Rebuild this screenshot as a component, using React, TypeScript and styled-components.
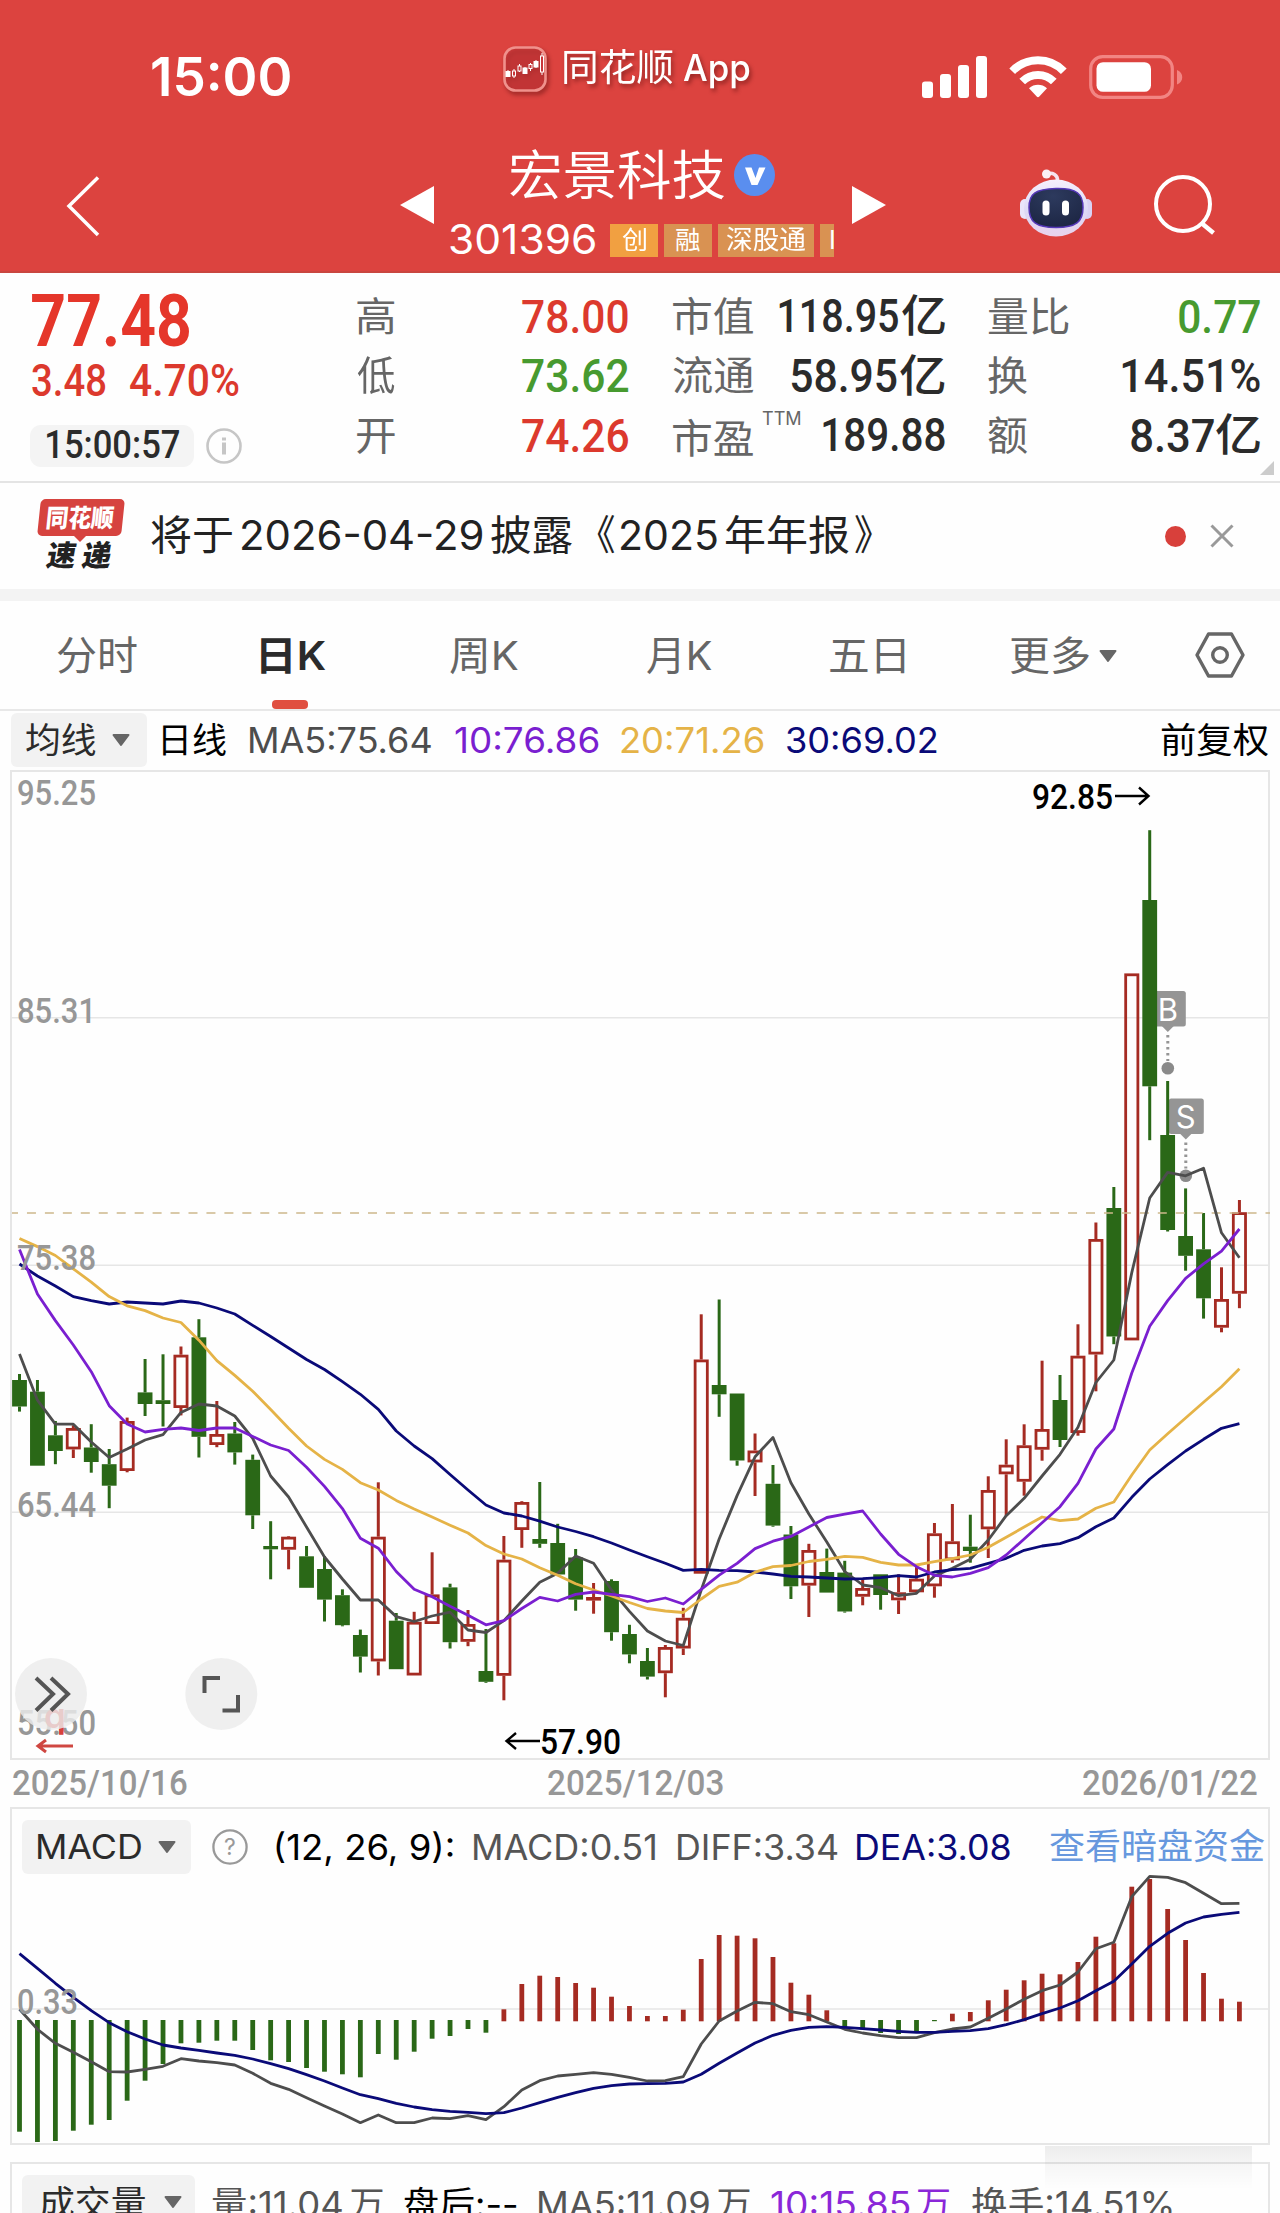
import React, { useLayoutEffect, useRef, useState } from "react";
import styled, { createGlobalStyle } from "styled-components";

const SF = `Inter, "Noto Sans CJK SC", sans-serif`;
const DIN = `Roboto, "Noto Sans CJK SC", sans-serif`;

const C = {
  brand: "#dc433f",
  up: "#dc392d",
  down: "#479a2f",
  ink: "#2b2b2b",
  label: "#666666",
  axis: "#979797",
  line: "#e6e6e6",
  candleUp: "#a52b22",
  candleDown: "#2a6817",
  ma5: "#4d4d4d",
  ma10: "#7a1fd0",
  ma20: "#e5b347",
  ma30: "#0a0a78",
};

const Global = createGlobalStyle`
  html, body { margin: 0; padding: 0; background: #fff; }
  body { width: 1280px; height: 2213px; overflow: hidden; font-family: ${SF}; }
`;

/* ---------- text fitted to a fixed ink width ---------- */

const FitBox = styled.span<{ $w: number; $ml: number; $size: number; $color: string; $weight: number; $din: boolean }>`
  flex: none;
  display: block;
  width: ${(p) => p.$w}px;
  margin-left: ${(p) => p.$ml}px;
  height: 1.2em;
  line-height: 1.2;
  font-family: ${(p) => (p.$din ? DIN : SF)};
  font-size: ${(p) => p.$size}px;
  font-weight: ${(p) => p.$weight};
  color: ${(p) => p.$color};
`;
const FitInk = styled.span`
  display: inline-block;
  white-space: pre;
  transform-origin: 0 50%;
`;

type FitProps = {
  w: number;
  size: number;
  children: string;
  ml?: number;
  dy?: number;
  color?: string;
  weight?: number;
  din?: boolean;
};

function Fit({ w, size, children, ml = 0, dy = 0, color = C.ink, weight = 400, din = false }: FitProps) {
  const ref = useRef<HTMLSpanElement>(null);
  const [transform, setTransform] = useState("none");
  useLayoutEffect(() => {
    const ctx = document.createElement("canvas").getContext("2d");
    if (!ctx || !ref.current) return;
    ctx.font = `${weight} ${size}px ${din ? DIN : SF}`;
    const m = ctx.measureText(children);
    const ink = m.actualBoundingBoxLeft + m.actualBoundingBoxRight;
    setTransform(`translateY(${dy}px) scaleX(${w / ink}) translateX(${m.actualBoundingBoxLeft}px)`);
  }, [w, size, children, weight, din, dy]);
  return (
    <FitBox $w={w} $ml={ml} $size={size} $color={color} $weight={weight} $din={din}>
      <FitInk ref={ref} style={{ transform }}>{children}</FitInk>
    </FitBox>
  );
}

/* ---------- layout parts ---------- */

const Page = styled.main`
  width: 1280px;
  height: 2213px;
  display: flex;
  flex-direction: column;
  overflow: hidden;
  background: #fefefe;
`;
const Header = styled.header`
  flex: none;
  height: 273px;
  box-sizing: border-box;
  background: ${C.brand};
  border-bottom: 2px solid #c9463f;
  display: flex;
  flex-direction: column;
`;
const StatusBar = styled.div`
  display: flex;
  align-items: center;
  padding: 22px 0 0 152px;
  box-sizing: border-box;
  height: 132px;
`;
const AppMark = styled.div`
  display: flex;
  align-items: center;
  width: 250px;
  margin: -17px 0 0 212px;
  filter: drop-shadow(2px 3px 2px rgba(60, 0, 0, 0.45));
`;
const StatusIcons = styled.div`
  display: flex;
  align-items: center;
  margin-left: 169px;
`;
const NavBar = styled.div`
  display: flex;
  align-items: center;
  height: 139px;
`;
const Glyph = styled.svg<{ $ml?: number; $mt?: number }>`
  flex: none;
  display: block;
  overflow: visible;
  margin-left: ${(p) => p.$ml ?? 0}px;
  margin-top: ${(p) => p.$mt ?? 0}px;
`;
const StockTitle = styled.div`
  width: 386px;
  margin-left: 15px;
  display: flex;
  flex-direction: column;
  margin-top: -1px;
`;
const TitleLine = styled.div`
  display: flex;
  align-items: center;
  height: 70px;
  padding-left: 61px;
`;
const CodeLine = styled.div`
  display: flex;
  align-items: center;
  height: 40px;
  margin-top: 8px;
  padding-left: 1px;
`;
const Tag = styled.span<{ $w: number; $bg: string; $ml: number }>`
  flex: none;
  width: ${(p) => p.$w}px;
  height: 33px;
  margin-left: ${(p) => p.$ml}px;
  display: flex;
  align-items: center;
  justify-content: center;
  overflow: hidden;
  background: ${(p) => p.$bg};
`;

const Quote = styled.section`
  flex: none;
  height: 210px;
  box-sizing: border-box;
  border-bottom: 2px solid #e4e4e4;
  display: flex;
  align-items: flex-start;
  position: relative;
`;
const PriceBlock = styled.div`
  width: 325px;
  padding: 1px 0 0 32px;
  display: flex;
  flex-direction: column;
`;
const PriceLine = styled.div<{ $h: number }>`
  display: flex;
  align-items: center;
  height: ${(p) => p.$h}px;
`;
const TimePill = styled.div`
  display: flex;
  align-items: center;
  width: 164px;
  height: 42px;
  margin-left: -2px;
  border-radius: 11px;
  background: #f4f4f4;
`;
const Stats = styled.dl<{ $ml: number; $w: number }>`
  width: ${(p) => p.$w}px;
  margin: 14px 0 0 ${(p) => p.$ml}px;
  display: flex;
  flex-direction: column;
`;
const Stat = styled.div`
  display: flex;
  align-items: center;
  justify-content: space-between;
  height: 59.5px;
`;
const Group = styled.span`
  display: flex;
  align-items: center;
`;
const Superscript = styled.span`
  align-self: flex-start;
  margin: -5px auto 0 9px;
`;
const Corner = styled.i`
  position: absolute;
  right: 6px;
  bottom: 6px;
  width: 14px;
  height: 14px;
  background: #cccccc;
  clip-path: polygon(100% 0, 100% 100%, 0 100%);
`;

const News = styled.section`
  flex: none;
  display: flex;
  align-items: center;
  height: 106px;
  padding-left: 37px;
`;
const NewsBadge = styled.div`
  width: 88px;
  height: 74px;
  display: flex;
  flex-direction: column;
`;
const BadgeTop = styled.div`
  height: 37px;
  display: flex;
  align-items: center;
  background: #d6433f;
  border-radius: 5px;
  margin: 0 2px;
  transform: skewX(-6deg);
`;
const BadgeTail = styled.i`
  width: 12px;
  height: 6px;
  margin-left: 37px;
  background: #d6433f;
  clip-path: polygon(0 0, 100% 0, 50% 100%);
`;
const BadgeBottom = styled.div`
  height: 28px;
  display: flex;
  align-items: center;
  transform: skewX(-10deg);
`;
const Dot = styled.i`
  width: 21px;
  height: 21px;
  margin-left: 292px;
  border-radius: 50%;
  background: #d8403b;
`;
const Band = styled.div`
  flex: none;
  height: 12px;
  background: #f3f3f3;
`;
const Tabs = styled.nav`
  flex: none;
  display: flex;
  align-items: center;
  height: 110px;
  box-sizing: border-box;
  border-bottom: 2px solid #e8e8e8;
`;
const Tab = styled.div<{ $ml: number; $active?: boolean }>`
  height: 108px;
  box-sizing: border-box;
  padding-top: 2px;
  margin-left: ${(p) => p.$ml}px;
  display: flex;
  align-items: center;
  position: relative;
  &::after {
    content: "";
    display: ${(p) => (p.$active ? "block" : "none")};
    position: absolute;
    left: 11px;
    bottom: 0;
    width: 36px;
    height: 9px;
    border-radius: 4px;
    background: #e04f40;
  }
`;
const Legend = styled.div`
  flex: none;
  display: flex;
  align-items: center;
  height: 59px;
  box-sizing: border-box;
  padding: 0 0 1px 11px;
`;
const Picker = styled.div<{ $w: number; $pl: number }>`
  flex: none;
  display: flex;
  align-items: center;
  width: ${(p) => p.$w}px;
  height: 54px;
  box-sizing: border-box;
  padding-left: ${(p) => p.$pl}px;
  border-radius: 6px;
  background: #f2f2f2;
`;
const Panel = styled.section<{ $h: number }>`
  flex: none;
  width: 1260px;
  height: ${(p) => p.$h}px;
  margin-left: 10px;
  box-sizing: border-box;
  border: 2px solid ${C.line};
  display: flex;
  flex-direction: column;
  position: relative;
`;
const PanelHead = styled.div`
  flex: none;
  display: flex;
  align-items: center;
  height: 54px;
  margin-top: 11px;
  padding-left: 10px;
`;
const Plot = styled.svg<{ $mt: number }>`
  flex: none;
  display: block;
  margin: ${(p) => p.$mt}px 0 0 -2px;
`;
const Dates = styled.div`
  flex: none;
  display: flex;
  align-items: center;
  height: 47px;
  padding-left: 12px;
`;
const Gap = styled.div`
  flex: none;
  height: 17px;
`;
const Smudge = styled.i`
  position: absolute;
  left: 1033px;
  top: -18px;
  width: 207px;
  height: 44px;
  background: linear-gradient(rgba(0, 0, 0, 0.07), rgba(0, 0, 0, 0.03) 45%, rgba(0, 0, 0, 0));
`;

const Caret = ({ ml }: { ml: number }) => (
  <Glyph $ml={ml} width="18" height="12" viewBox="0 0 18 12">
    <path d="M1.500 1H16.500L9 11Z" fill="#666" stroke="#666" strokeWidth="2" strokeLinejoin="round" />
  </Glyph>
);

/* ---------- chart data: plot coordinates ---------- */

const STEP = 17.94;
const cx = (i: number) => 19.5 + i * STEP;

// direction, high, body top, body bottom, low
type Candle = [0 | 1, number, number, number, number];
const candles: Candle[] = [
  [0, 1374, 1380, 1406.5, 1411.6], [0, 1380, 1391.7, 1465.7, 1465.7], [0, 1421, 1435.3, 1451, 1464.2], [1, 1425.3, 1428, 1449.4, 1458],
  [0, 1424.2, 1447.5, 1462, 1472.7], [0, 1449, 1464.2, 1485.7, 1508.2], [1, 1417.6, 1421, 1471, 1472.3], [0, 1359, 1392.4, 1404, 1416],
  [0, 1354.3, 1400.2, 1404, 1426.5], [1, 1346.5, 1354.7, 1408, 1415.4], [0, 1319.2, 1337.3, 1436.8, 1457.5], [1, 1401, 1434, 1445, 1447.2],
  [0, 1422, 1433.5, 1452.4, 1464.6], [0, 1454.6, 1459.8, 1515.3, 1529], [0, 1521.2, 1546, 1549.3, 1579.3], [1, 1536, 1536.7, 1549.7, 1569.3],
  [0, 1546, 1556.3, 1587.8, 1587.8], [0, 1556, 1569, 1599.6, 1621.5], [0, 1589.3, 1595.2, 1625.2, 1626.3], [0, 1629.6, 1635, 1656.6, 1672.5],
  [1, 1482.3, 1536.7, 1661.4, 1675.5], [0, 1613, 1620.7, 1669.2, 1669.2], [1, 1611.8, 1621.8, 1675.5, 1675.5], [1, 1552.3, 1594.4, 1624, 1624],
  [0, 1583.7, 1587.4, 1642.2, 1648.5], [1, 1610, 1624, 1641.8, 1646.2], [0, 1629, 1671, 1681.8, 1682.8], [1, 1536, 1559.7, 1675.8, 1700.3],
  [1, 1501.2, 1502, 1530, 1547.8], [0, 1482, 1539, 1543.8, 1547.8], [0, 1523.8, 1543, 1574.5, 1574.5], [0, 1549, 1557.5, 1599.6, 1610.7],
  [1, 1583, 1597, 1600.4, 1613.7], [0, 1579.3, 1581, 1632.2, 1640.7], [0, 1624.8, 1634, 1654.4, 1663.3], [0, 1648, 1661, 1676.6, 1679.5],
  [1, 1645, 1647, 1673.2, 1697.3], [1, 1607.8, 1617.8, 1648.5, 1655], [1, 1314.3, 1359.5, 1573.7, 1573.7], [0, 1299.5, 1385, 1394.3, 1416.8],
  [0, 1393.5, 1393.5, 1460.5, 1465.7], [1, 1433.5, 1450.5, 1462.4, 1496], [0, 1465, 1483.8, 1525.6, 1526.7], [0, 1526, 1534.5, 1586.3, 1599],
  [1, 1543.8, 1550, 1585.6, 1617], [0, 1548.6, 1572, 1592.6, 1592.6], [0, 1560.8, 1572.6, 1611.5, 1612.6], [1, 1580, 1588, 1596.7, 1605.3],
  [0, 1574.3, 1574.3, 1595, 1609.7], [1, 1574.3, 1592.3, 1600.3, 1614], [1, 1566, 1578.7, 1592.3, 1594], [1, 1523, 1533.3, 1586.3, 1597.7],
  [1, 1504, 1541.3, 1560.3, 1562.7], [0, 1514.7, 1546.7, 1551, 1562.7], [1, 1476.3, 1490, 1529.3, 1558], [1, 1439.3, 1464.7, 1474.3, 1515.7],
  [1, 1424.3, 1445.3, 1481.7, 1495.7], [1, 1360.7, 1429, 1449.7, 1460.7], [0, 1375, 1400, 1440, 1447], [1, 1324.3, 1355.7, 1433, 1435.7],
  [1, 1222.5, 1239, 1354.5, 1391.3], [0, 1187, 1208, 1336.5, 1344.2], [1, 973.4, 973.4, 1340.4, 1340.4], [0, 830.2, 900, 1086.3, 1140.2],
  [0, 1081, 1135, 1230, 1231.5], [0, 1188.4, 1236, 1255.8, 1270.7], [0, 1213, 1249.3, 1298.3, 1318.6], [1, 1267.3, 1299, 1327.7, 1332.3],
  [1, 1200, 1212.2, 1293.7, 1308.2],
];

const ma5 = [1353.9, 1400.2, 1424.2, 1424.2, 1442, 1457.5, 1449, 1440, 1434.6, 1412.4, 1404, 1406, 1416, 1438.3, 1476, 1497, 1527, 1557, 1579, 1600, 1600, 1616.6, 1621.5, 1616, 1612.2, 1630, 1632.5, 1620.7, 1601, 1582.2, 1573.3, 1556, 1563.3, 1590, 1611.4, 1631, 1641, 1645.5, 1590, 1539, 1495.6, 1456.8, 1437.5, 1482.7, 1514, 1542, 1571.5, 1585, 1587.7, 1595.7, 1593.3, 1576, 1568.3, 1559.3, 1540, 1515.7, 1498.3, 1476, 1454.3, 1427.3, 1382.5, 1360, 1272.6, 1198, 1172.4, 1175.8, 1168.2, 1232.8, 1257.7];
const ma10 = [1249.6, 1294, 1320.6, 1345, 1371.7, 1405.7, 1424, 1432, 1429.4, 1428, 1430.5, 1428, 1428, 1436.4, 1445, 1450.5, 1467.2, 1486.4, 1508.6, 1538.2, 1548.2, 1571.5, 1589.3, 1596.7, 1606.3, 1615.2, 1624.8, 1620.7, 1608.5, 1597.4, 1601, 1594.4, 1592, 1594.4, 1596.7, 1601.5, 1598, 1604, 1589.3, 1575.2, 1563.3, 1548.6, 1541.2, 1536.4, 1527, 1517.5, 1514.2, 1511, 1534, 1554.3, 1566.7, 1575.3, 1577, 1573.3, 1567.7, 1555, 1539, 1522.7, 1506.7, 1483.3, 1449, 1429, 1373, 1326.2, 1300.6, 1278.4, 1263.8, 1251.2, 1229];
const ma20 = [1238.5, 1246.6, 1255.5, 1268.8, 1282.2, 1296.6, 1305.8, 1310.6, 1318, 1322.5, 1340.2, 1360.6, 1375.4, 1391.3, 1409.4, 1428.3, 1446, 1459.4, 1469.4, 1482.7, 1490, 1500.4, 1509, 1517, 1525.2, 1533, 1545.6, 1554, 1559, 1567.8, 1575.2, 1583.7, 1590, 1596, 1602.5, 1608.5, 1611, 1612.5, 1599, 1586.3, 1582.2, 1572.2, 1566.7, 1565.5, 1561.5, 1559.3, 1556.3, 1557.4, 1562.3, 1565, 1565, 1561.7, 1558.7, 1555, 1547.3, 1537.3, 1527, 1517, 1520.7, 1519, 1508.3, 1502, 1475, 1450, 1433.7, 1418, 1402.3, 1386.7, 1368.7];
const ma30 = [1264, 1276, 1286, 1296.6, 1300.7, 1304, 1302, 1303, 1304, 1301, 1303, 1308, 1314, 1325.4, 1336.5, 1348, 1359.5, 1369.5, 1381.7, 1394.3, 1409.4, 1431, 1446, 1458.6, 1474.5, 1490, 1505, 1513, 1516, 1521.2, 1527, 1531.5, 1536.7, 1543, 1550, 1556.7, 1563.3, 1570.4, 1569.3, 1570.4, 1570.7, 1572, 1574, 1576.3, 1577, 1578, 1579, 1578.7, 1577.7, 1575.7, 1577, 1572, 1569.7, 1568.3, 1563.3, 1558.3, 1550.3, 1546, 1543.7, 1537.7, 1526.7, 1518, 1497.3, 1479, 1464.7, 1451, 1439.3, 1428.3, 1423.7];

const bars = [2131.7, 2142, 2141, 2130.7, 2124.7, 2120, 2100.7, 2080.7, 2064, 2043.3, 2042.7, 2040.7, 2040.7, 2050, 2060.3, 2062, 2068, 2071.7, 2074.3, 2077.3, 2054, 2059.7, 2051.7, 2038.7, 2036, 2029, 2032.7, 2009.3, 1984, 1975.7, 1977, 1983, 1987.7, 1996.7, 2006, 2016, 2016, 2009.7, 1959, 1935, 1935.7, 1938.3, 1957, 1982.7, 1994.7, 2010.3, 2028, 2029.3, 2033, 2034, 2031.7, 2021.2, 2013.7, 2012, 2000.3, 1989.7, 1980.3, 1973.7, 1974.3, 1962, 1936.7, 1943.3, 1886.7, 1879, 1909, 1940, 1973, 1998.7, 2001.7];
const diff = [2009.3, 2029.3, 2043.3, 2052.3, 2061.7, 2071.7, 2072, 2069.3, 2066.3, 2058.7, 2061, 2062.7, 2065, 2073.3, 2083.3, 2089.3, 2097.7, 2106, 2114, 2122.7, 2115, 2122.7, 2122.7, 2118, 2118.7, 2115.7, 2119.7, 2106.7, 2090, 2080.7, 2076, 2074.3, 2072.7, 2074.3, 2077.3, 2081, 2080.7, 2076.7, 2044, 2021, 2011, 2002.3, 2003.7, 2011.7, 2014.7, 2022, 2029.3, 2033, 2035.7, 2037.7, 2037.7, 2032.7, 2029, 2027, 2018.3, 2009, 1999.3, 1990.7, 1985, 1972, 1948.7, 1942.3, 1896.7, 1876.3, 1877.3, 1882.7, 1893.3, 1903.7, 1903.3];
const dea = [1953.7, 1968.3, 1983.3, 1997.3, 2010.7, 2022.7, 2031.7, 2039, 2045, 2048, 2050.3, 2053, 2055.3, 2059, 2063.7, 2068.7, 2074.7, 2081, 2088, 2094.7, 2098.7, 2103.3, 2107, 2109.7, 2111.3, 2112.3, 2113.7, 2112.7, 2108, 2102.7, 2097.3, 2092.7, 2088.3, 2085.7, 2084, 2083.7, 2083.3, 2082, 2074.3, 2063.3, 2053, 2043, 2035.3, 2030.3, 2027.3, 2026.7, 2027.3, 2028.7, 2030, 2031.3, 2032.3, 2032.3, 2031.3, 2030.7, 2028.7, 2024.7, 2019.7, 2013.7, 2008, 2000.7, 1990.7, 1981.3, 1964, 1946.3, 1933.3, 1923, 1917, 1914.3, 1912.3];

const Series = ({ data, color }: { data: number[]; color: string }) => (
  <polyline points={data.map((y, i) => `${cx(i)},${y}`).join(" ")} fill="none" stroke={color} strokeWidth="2.8" strokeLinejoin="round" />
);

const AxisText = ({ y, w = 79, children }: { y: number; w?: number; children: string }) => (
  <text x="17" y={y + 12.5} fontFamily={DIN} fontSize="35" fontWeight="500" fill={C.axis} textLength={w} lengthAdjust="spacingAndGlyphs">
    {children}
  </text>
);

const Marker = ({ x, y, label }: { x: number; y: number; label: string }) => (
  <g fill="#959595">
    <rect x={x - 17} y={y} width="35" height="35.5" rx="2.5" />
    <path d={`M${x - 6} ${y + 35}h12l-6 6z`} />
    <line x1={x} x2={x} y1={y + 44} y2={y + 70} stroke="#959595" strokeWidth="3" strokeDasharray="2.6 3.4" />
    <circle cx={x} cy={y + 77.3} r="6.3" fill="#8a8a8a" />
    <text x={x} y={y + 30} textAnchor="middle" fontFamily={SF} fontSize="31" fill="#fff">{label}</text>
  </g>
);

function KLine() {
  return (
    <Plot $mt={-2} width="1260" height="990" viewBox="10 770 1260 990">
      {[1017.7, 1265.2, 1512.3].map((y) => (
        <line key={y} x1="10" x2="1270" y1={y} y2={y} stroke={C.line} strokeWidth="1.6" />
      ))}
      <AxisText y={792.3}>95.25</AxisText>
      <AxisText y={1010}>85.31</AxisText>
      <Marker x={1167.8} y={991} label="B" />
      <Marker x={1185.8} y={1098.4} label="S" />
      {candles.map(([up, hi, top, bot, lo], i) => {
        const x = cx(i);
        const color = up ? C.candleUp : C.candleDown;
        return (
          <g key={i}>
            {hi < top && <line x1={x} x2={x} y1={hi} y2={top} stroke={color} strokeWidth="3" />}
            {lo > bot && <line x1={x} x2={x} y1={bot} y2={lo} stroke={color} strokeWidth="3" />}
            {up ? (
              <rect x={x - 6.1} y={top + 1.4} width="12.2" height={Math.max(bot - top - 2.8, 0.8)} fill="none" stroke={color} strokeWidth="2.8" />
            ) : (
              <rect x={x - 7.4} y={top} width="14.8" height={bot - top} fill={color} />
            )}
          </g>
        );
      })}
      <line x1="12" x2="1270" y1="1213" y2="1213" stroke="#cdb88c" strokeWidth="1.6" strokeDasharray="9 8.95" strokeDashoffset="3" />
      <Series data={ma5} color={C.ma5} />
      <Series data={ma30} color={C.ma30} />
      <Series data={ma20} color={C.ma20} />
      <Series data={ma10} color={C.ma10} />
      <AxisText y={1257.5}>75.38</AxisText>
      <AxisText y={1504.5}>65.44</AxisText>
      <AxisText y={1722.5}>55.50</AxisText>
      <g fontFamily={DIN} fontSize="35" fontWeight="500" fill="#000">
        <text x="1032" y="808.7" textLength="81" lengthAdjust="spacingAndGlyphs">92.85</text>
        <text x="540" y="1753.5" textLength="81" lengthAdjust="spacingAndGlyphs">57.90</text>
      </g>
      <g fill="none" stroke="#000" strokeWidth="2.4">
        <path d="M1115 796H1148M1139 787.5L1148.5 796L1139 804.5" />
        <path d="M540 1741H507M516 1733L506.500 1741L516 1749" />
      </g>
      <text x="44" y="1728" fontFamily={SF} fontSize="35" fontWeight="600" fill="#d8403b">q</text>
      <path d="M73 1746H38M46 1740L38 1746L46 1752" fill="none" stroke="#cf4741" strokeWidth="3" />
      <g fill="#ebebeb" fillOpacity="0.82">
        <circle cx="51" cy="1694" r="36" />
        <circle cx="221.300" cy="1694" r="36" />
      </g>
      <g fill="none" stroke="#555" strokeWidth="4">
        <path d="M36 1678L53 1694L36 1710.500M51 1678L68 1694L51 1710.500" />
        <path d="M204.500 1693V1678H220M238 1695V1710.500H222.500" />
      </g>
    </Plot>
  );
}

function MacdPlot() {
  return (
    <Plot $mt={0} width="1260" height="269" viewBox="10 1874 1260 269">
      <line x1="10" x2="1270" y1="2009" y2="2009" stroke={C.line} strokeWidth="1.6" />
      {bars.map((y, i) => {
        const up = y < 2021;
        return <rect key={i} x={cx(i) - 2.4} y={up ? y : 2020} width="4.8" height={up ? 2021.3 - y : y - 2020} fill={up ? C.candleUp : C.candleDown} />;
      })}
      <Series data={diff} color={C.ma5} />
      <Series data={dea} color={C.ma30} />
      <AxisText y={2001.3} w={61}>0.33</AxisText>
    </Plot>
  );
}

/* ---------- icons ---------- */

const AppIcon = () => (
  <Glyph width="44" height="46" viewBox="0 0 44 46">
    <rect x="1.500" y="1.500" width="41" height="43" rx="11" fill="#c9353a" fillOpacity="0.5" stroke="#f0918c" strokeWidth="2.600" />
    <g fill="#fff" stroke="#fff" strokeWidth="1">
      <path d="M5 24V31M11 23V32M16.500 18V26M22 21V28M27.500 17V25M33 14V22M39 7V29" />
      <rect x="3" y="25.500" width="4" height="5" />
      <rect x="9.500" y="25" width="3" height="5" fill="#c9353a" />
      <rect x="15" y="20" width="3" height="5" fill="#c9353a" />
      <rect x="20" y="22" width="4" height="5.500" />
      <rect x="26" y="18.500" width="3" height="4" fill="#c9353a" />
      <rect x="31" y="15.500" width="4" height="5.500" />
      <rect x="37.500" y="10" width="3" height="16" fill="#c9353a" />
    </g>
  </Glyph>
);

const Signal = () => (
  <Glyph width="65" height="42" viewBox="0 0 65 42" fill="#fff">
    <rect x="0" y="25.500" width="11" height="16.500" rx="3" />
    <rect x="18" y="18" width="11" height="24" rx="3" />
    <rect x="36" y="9" width="11" height="33" rx="3" />
    <rect x="54" y="0" width="11" height="42" rx="3" />
  </Glyph>
);

const Wifi = () => (
  <Glyph $ml={22} width="58" height="42" viewBox="0 0 58 42">
    <g fill="none" stroke="#fff" strokeWidth="8">
      <path d="M3.200 15.200C17.500 .6 40.500 .6 54.800 15.200" />
      <path d="M13.200 25.500C22 16.700 36 16.700 44.800 25.500" />
    </g>
    <path d="M20 32.200C25.200 27.700 32.800 27.700 38 32.200L30.300 40.600Q29 42 27.700 40.600Z" fill="#fff" />
  </Glyph>
);

const Battery = () => (
  <Glyph $ml={22} width="94" height="44" viewBox="0 0 94 44">
    <rect x="1.700" y="1.700" width="81.600" height="40.600" rx="12" fill="none" stroke="#f28583" strokeWidth="3.200" />
    <rect x="7.500" y="7.200" width="54.500" height="29.600" rx="6.500" fill="#fff" />
    <path d="M88 15C95 17.500 95 27 88 29.500Z" fill="#f28583" />
  </Glyph>
);

const Robot = () => (
  <Glyph $ml={134} $mt={2} width="72" height="68" viewBox="0 0 72 68">
    <defs>
      <linearGradient id="shell" x1="0" y1="0" x2="0" y2="1">
        <stop offset="0" stopColor="#f7effc" />
        <stop offset="0.55" stopColor="#dcd9f6" />
        <stop offset="1" stopColor="#e9d3ec" />
      </linearGradient>
      <radialGradient id="visor" cx="0.45" cy="0.2" r="0.9">
        <stop offset="0" stopColor="#2d3a5e" />
        <stop offset="1" stopColor="#1b2441" />
      </radialGradient>
    </defs>
    <path d="M26 5C33 3 38 6 37.500 12" fill="none" stroke="#f6e2ee" strokeWidth="3.500" strokeLinecap="round" />
    <circle cx="26.500" cy="5" r="4.500" fill="#fbf0f6" />
    <rect x="0" y="30" width="10" height="20" rx="5" fill="#e9e4fa" />
    <rect x="62" y="30" width="10" height="20" rx="5" fill="#d9d2f4" />
    <ellipse cx="36" cy="39" rx="32" ry="28.500" fill="url(#shell)" />
    <path d="M36 19.500C57 19 63 25 63 38.500C63 53 56 58.500 36 58.500S9 53 9 38.500C9 25 15 20 36 19.500Z" fill="url(#visor)" stroke="#5538b8" strokeWidth="1.500" />
    <rect x="22.500" y="31.500" width="7" height="15" rx="3.500" fill="#fff" />
    <rect x="42" y="31.500" width="7" height="15" rx="3.500" fill="#fff" />
  </Glyph>
);

/* ---------- page ---------- */

export default function App() {
  return (
    <Page>
      <Global />
      <Header>
        <StatusBar>
          <Fit w={138.500} size={53} weight={600} dy={1} color="#fff">15:00</Fit>
          <AppMark>
            <AppIcon />
            <Fit ml={17.500} w={109} size={37} color="#fff">同花顺</Fit>
            <Fit ml={9.500} w={67} size={37} color="#fff" weight={500}>App</Fit>
          </AppMark>
          <StatusIcons>
            <Signal />
            <Wifi />
            <Battery />
          </StatusIcons>
        </StatusBar>
        <NavBar>
          <Glyph $ml={66} $mt={8} width="34" height="62" viewBox="0 0 34 62">
            <path d="M32 2.500L3 31L32 60" fill="none" stroke="#fff" strokeWidth="3.500" />
          </Glyph>
          <Glyph $ml={300} $mt={6} width="34" height="38" viewBox="0 0 34 38">
            <path d="M34 0V38L0 19Z" fill="#fff" />
          </Glyph>
          <StockTitle>
            <TitleLine>
              <Fit w={214} size={53} color="#fff" weight={350}>宏景科技</Fit>
              <Glyph $ml={10} $mt={-4} width="41" height="42" viewBox="0 0 41 42">
                <ellipse cx="20.500" cy="21" rx="20.500" ry="21" fill="#5a8eef" />
                <path d="M11 13.500H17.500L21.500 24L25 13.500H31.500L23.500 31H17.500Z" fill="#fff" />
              </Glyph>
            </TitleLine>
            <CodeLine>
              <Fit w={145} size={41} color="#fff">301396</Fit>
              <Tag $ml={15} $w={48} $bg="#f1a041"><Fit w={24} size={25} color="#fff">创</Fit></Tag>
              <Tag $ml={6} $w={48} $bg="#d99252"><Fit w={24.500} size={25} color="#fff">融</Fit></Tag>
              <Tag $ml={6} $w={96} $bg="#d99252"><Fit w={80} size={26} color="#fff">深股通</Fit></Tag>
              <Tag $ml={6} $w={14} $bg="#d99252"><Fit ml={11} w={3} size={25} color="#fff">I</Fit></Tag>
            </CodeLine>
          </StockTitle>
          <Glyph $ml={17} $mt={6} width="34" height="38" viewBox="0 0 34 38">
            <path d="M0 0V38L34 19Z" fill="#fff" />
          </Glyph>
          <Robot />
          <Glyph $ml={61} $mt={5} width="62" height="62" viewBox="0 0 62 62">
            <circle cx="30" cy="31" r="27" fill="none" stroke="#fff" strokeWidth="4" />
            <path d="M49 50.500L60.500 60" stroke="#fff" strokeWidth="4.500" />
          </Glyph>
        </NavBar>
      </Header>

      <Quote>
        <PriceBlock>
          <PriceLine $h={94}>
            <Fit w={157} size={72} weight={700} din dy={0.5} color="#e5362a">77.48</Fit>
          </PriceLine>
          <PriceLine $h={28}>
            <Fit w={73.500} size={43.500} weight={500} din color={C.up}>3.48</Fit>
            <Fit ml={24} w={109} size={43.500} weight={500} din color={C.up}>4.70%</Fit>
          </PriceLine>
          <PriceLine $h={99}>
            <TimePill>
              <Fit ml={17} w={132} size={38} weight={500} din>15:00:57</Fit>
            </TimePill>
            <Glyph $ml={12} width="36" height="36" viewBox="0 0 36 36">
              <circle cx="18" cy="18" r="16.500" fill="none" stroke="#c6c6c6" strokeWidth="2.600" />
              <path d="M18 9.500V12.500M18 14.500V26.500" stroke="#c6c6c6" strokeWidth="4" />
            </Glyph>
          </PriceLine>
        </PriceBlock>
        <Stats $ml={0} $w={270.500}>
          <Stat><Fit w={37.500} size={40} color={C.label}>高</Fit><Fit w={106} size={47} weight={500} din color={C.up}>78.00</Fit></Stat>
          <Stat><Fit w={37.500} size={40} color={C.label}>低</Fit><Fit w={106} size={47} weight={500} din color={C.down}>73.62</Fit></Stat>
          <Stat><Fit w={37.500} size={40} color={C.label}>开</Fit><Fit w={106} size={47} weight={500} din color={C.up}>74.26</Fit></Stat>
        </Stats>
        <Stats $ml={45} $w={272}>
          <Stat>
            <Fit w={80.500} size={40} color={C.label}>市值</Fit>
            <Group><Fit w={119.500} size={46} weight={500} din>118.95</Fit><Fit ml={3.500} w={43} size={44} weight={500}>亿</Fit></Group>
          </Stat>
          <Stat>
            <Fit w={80.500} size={40} color={C.label}>流通</Fit>
            <Group><Fit w={106} size={46} weight={500} din>58.95</Fit><Fit ml={3.500} w={44.500} size={44} weight={500}>亿</Fit></Group>
          </Stat>
          <Stat>
            <Fit w={80.500} size={40} dy={3} color={C.label}>市盈</Fit>
            <Superscript><Fit w={39} size={18.500} dy={6} color={C.label}>TTM</Fit></Superscript>
            <Fit w={121.500} size={46} weight={500} din>189.88</Fit>
          </Stat>
        </Stats>
        <Stats $ml={43.500} $w={272}>
          <Stat><Fit w={80.500} size={40} color={C.label}>量比</Fit><Fit w={81} size={47} weight={500} din color={C.down}>0.77</Fit></Stat>
          <Stat><Fit w={39} size={40} color={C.label}>换</Fit><Fit w={138} size={47} weight={500} din>14.51%</Fit></Stat>
          <Stat>
            <Fit w={39} size={40} color={C.label}>额</Fit>
            <Group><Fit w={83} size={47} weight={500} din>8.37</Fit><Fit ml={2.500} w={44} size={44} weight={500}>亿</Fit></Group>
          </Stat>
        </Stats>
        <Corner />
      </Quote>

      <News>
        <NewsBadge>
          <BadgeTop><Fit ml={8} w={67} size={25} weight={900} color="#fff">同花顺</Fit></BadgeTop>
          <BadgeTail />
          <BadgeBottom>
            <Fit ml={10} w={29} size={29} weight={900} color="#222">速</Fit>
            <Fit ml={6.500} w={29} size={29} weight={900} color="#222">递</Fit>
          </BadgeBottom>
        </NewsBadge>
        <Fit ml={25.500} w={81} size={41} color="#222">将于</Fit>
        <Fit ml={10.500} w={240} size={41} color="#222">2026-04-29</Fit>
        <Fit ml={8.500} w={81} size={41} color="#222">披露</Fit>
        <Fit ml={25} w={17.500} size={41} color="#222">《</Fit>
        <Fit ml={7} w={96} size={41} color="#222">2025</Fit>
        <Fit ml={7.500} w={124} size={41} color="#222">年年报</Fit>
        <Fit ml={6.500} w={17.500} size={41} color="#222">》</Fit>
        <Dot />
        <Glyph $ml={24} width="24" height="24" viewBox="0 0 24 24">
          <path d="M1.500 1.500L22.500 22.500M22.500 1.500L1.500 22.500" stroke="#999" strokeWidth="3" />
        </Glyph>
      </News>
      <Band />

      <Tabs>
        <Tab $ml={57}><Fit w={80} size={40} color={C.label}>分时</Fit></Tab>
        <Tab $ml={124} $active><Fit w={65} size={40} weight={600}>日K</Fit></Tab>
        <Tab $ml={123.500}><Fit w={68} size={40} color={C.label}>周K</Fit></Tab>
        <Tab $ml={129.500}><Fit w={64.500} size={40} color={C.label}>月K</Fit></Tab>
        <Tab $ml={118.500}><Fit w={75} size={40} color={C.label}>五日</Fit></Tab>
        <Tab $ml={105}><Fit w={79} size={40} color={C.label}>更多</Fit><Caret ml={10} /></Tab>
        <Glyph $ml={78} width="50" height="46" viewBox="0 0 50 46">
          <path d="M13.500 2H36.500L48 23L36.500 44H13.500L2 23Z" fill="none" stroke="#666" strokeWidth="3.400" strokeLinejoin="round" />
          <circle cx="25" cy="23" r="7.300" fill="none" stroke="#666" strokeWidth="3.400" />
        </Glyph>
      </Tabs>

      <Legend>
        <Picker $w={136} $pl={14.500}><Fit w={69.500} size={35}>均线</Fit><Caret ml={17} /></Picker>
        <Fit ml={15.500} w={63} size={35} color="#000">日线</Fit>
        <Fit ml={24.500} w={181} size={35} color={C.ma5}>MA5:75.64</Fit>
        <Fit ml={23.500} w={143.500} size={35} color={C.ma10}>10:76.86</Fit>
        <Fit ml={23} w={142.500} size={35} color={C.ma20}>20:71.26</Fit>
        <Fit ml={23} w={149.500} size={35} color={C.ma30}>30:69.02</Fit>
        <Fit ml={224.500} w={107} size={35} color="#000">前复权</Fit>
      </Legend>

      <Panel $h={990}><KLine /></Panel>

      <Dates>
        <Fit ml={0.500} w={174} size={35} weight={500} din color={C.axis}>2025/10/16</Fit>
        <Fit ml={361} w={174.500} size={35} weight={500} din color={C.axis}>2025/12/03</Fit>
        <Fit ml={361} w={174} size={35} weight={500} din color={C.axis}>2026/01/22</Fit>
      </Dates>

      <Panel $h={338}>
        <PanelHead>
          <Picker $w={169} $pl={15.500}><Fit w={103} size={34.500}>MACD</Fit><Caret ml={17.500} /></Picker>
          <Glyph $ml={21} width="36" height="36" viewBox="0 0 36 36">
            <circle cx="18" cy="18" r="16.600" fill="none" stroke="#999" strokeWidth="2.300" />
            <text x="18" y="26" textAnchor="middle" fontFamily={SF} fontSize="23" fill="#999">?</text>
          </Glyph>
          <Fit ml={28} w={177} size={35} color="#000">(12, 26, 9):</Fit>
          <Fit ml={21} w={181.500} size={35} color="#555">MACD:0.51</Fit>
          <Fit ml={22} w={159.500} size={35} color="#555">DIFF:3.34</Fit>
          <Fit ml={20} w={153} size={35} color={C.ma30}>DEA:3.08</Fit>
          <Fit ml={39.500} w={214.500} size={35.500} color="#6798de">查看暗盘资金</Fit>
        </PanelHead>
        <MacdPlot />
      </Panel>
      <Gap />
      <Panel $h={200}>
        <PanelHead>
          <Picker $w={173} $pl={17.500}><Fit w={105.500} size={35} dy={1}>成交量</Fit><Caret ml={19} /></Picker>
          <Fit ml={16.500} w={130} size={35} dy={2} color="#555">量:11.04</Fit>
          <Fit ml={9} w={32} size={35} dy={2} color="#555">万</Fit>
          <Fit ml={21.500} w={112.500} size={35} dy={2} color="#000">盘后:--</Fit>
          <Fit ml={22} w={170} size={35} dy={2} color="#555">MA5:11.09</Fit>
          <Fit ml={9} w={32} size={35} dy={2} color="#555">万</Fit>
          <Fit ml={21} w={139} size={35} dy={2} color="#8a27d8">10:15.85</Fit>
          <Fit ml={7.500} w={32} size={35} dy={2} color="#8a27d8">万</Fit>
          <Fit ml={22.500} w={200} size={35} dy={2} color="#555">换手:14.51%</Fit>
        </PanelHead>
        <Smudge />
      </Panel>
    </Page>
  );
}
